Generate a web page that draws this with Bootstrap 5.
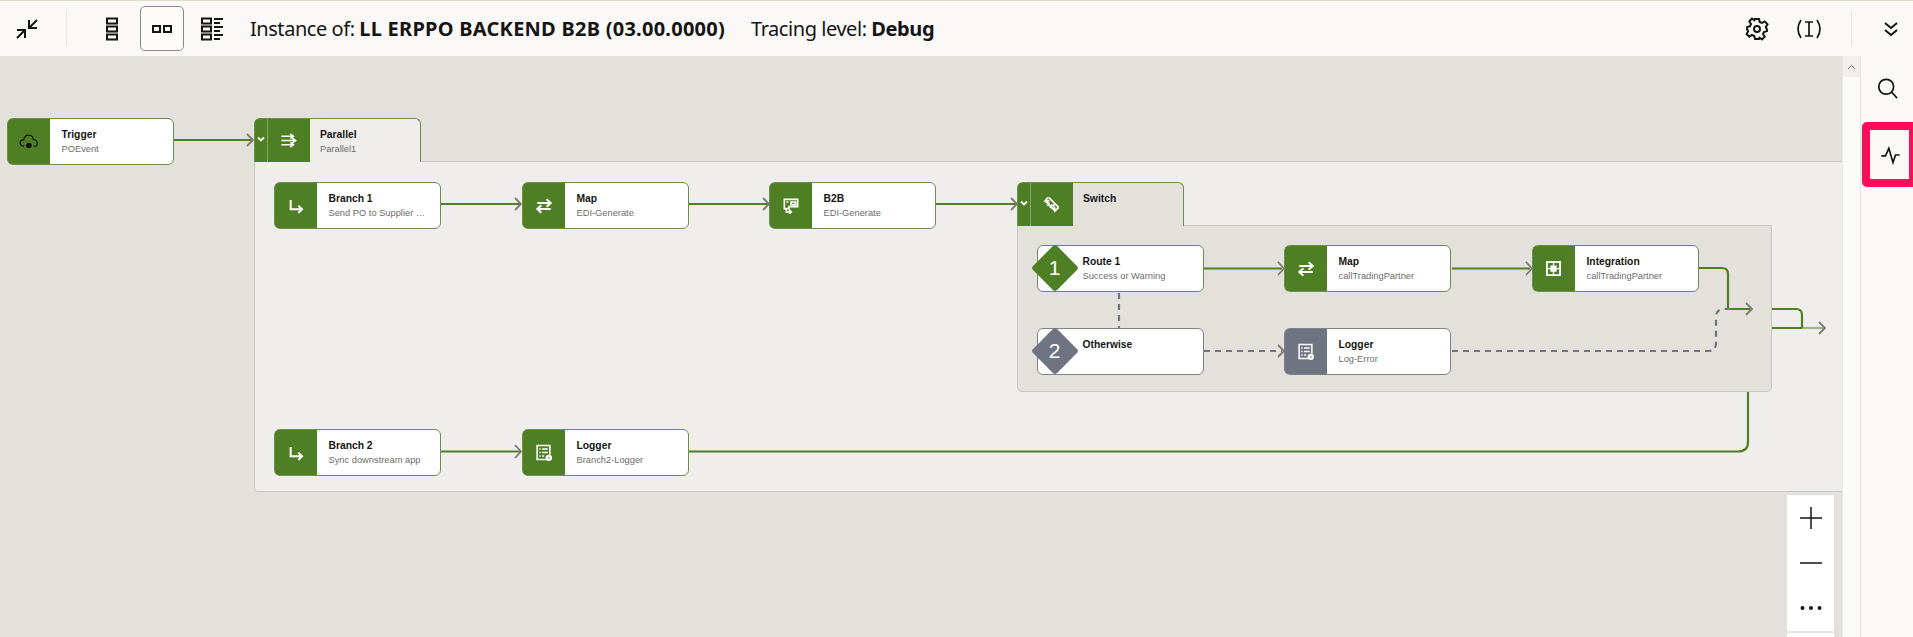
<!DOCTYPE html>
<html lang="en">

<head>
    <meta charset="UTF-8">
    <meta name="viewport" content="width=device-width, initial-scale=1.0">
    <title>Instance of LL ERPPO BACKEND B2B</title>
    <link href="https://cdn.jsdelivr.net/npm/bootstrap@5.3.0/dist/css/bootstrap.min.css" rel="stylesheet">
    <style>
        html, body { height: 100%; overflow: hidden; }
        body { background: #e4e1dc; color: #161513; font-family: "Liberation Sans", Arial, sans-serif; }

        .top-bar { height: 56px; background: #fbf9f8; border-top: 1px solid #dcdccb; flex: none; }
        .bar-title { font-family: "Noto Sans", sans-serif; font-size: 20px; letter-spacing: -0.45px; white-space: nowrap; line-height: 1; }
        .bar-title b { font-weight: 700; letter-spacing: 0.25px; }
        .bar-title b.tight { letter-spacing: -0.4px; }
        .bar-sep { width: 1px; height: 37px; background: #e6e4e1; }
        .bar-btn { width: 44px; height: 45px; padding: 0; border: 1px solid transparent; border-radius: 5px; background: transparent; }
        .bar-btn.picked { border-color: #8d8a85; background: #fdfcfb; }
        .ico { fill: none; stroke: #161513; stroke-width: 2; }

        .work-area { height: 581px; }
        .canvas { width: 1842px; background: #e4e1dc; overflow: hidden; }
        .scroll-strip { width: 19px; background: #fbfbfa; border-left: 1px solid #e9e8e6; border-right: 1px solid #e6e4e2; }
        .scroll-up { height: 21px; background: #f0efee; }
        .side-rail { width: 52px; background: #faf9f7; overflow: hidden; }
        .rail-search { height: 66px; padding-top: 22px; padding-left: 1px; }
        .rail-mark { width: 55px; height: 65px; flex: none; margin-left: 1px; border: 8px solid #fe0d5b; border-radius: 5px; }

        .group-box { position: absolute; border: 1px solid #c9c6c0; border-radius: 0 0 4px 4px; }
        .group-outer { background: #efeeec; }
        .group-inner { background: #e4e1dc; border-radius: 0 0 5px 5px; }

        .flow-node { position: absolute; width: 167px; height: 47px; background: #fff; border: 1.5px solid #6a9149; border-radius: 6px; }
        .flow-node.idle { border-color: #7f828a; }
        .flow-node.tab { height: 44px; border-bottom: 0; border-radius: 6px 6px 0 0; background: #efeeec; }
        .flow-node.tab.on-inner { background: #e4e1dc; }
        .node-icon { width: 41.5px; background: #4f7f24; border-radius: 4px 0 0 4px; flex: none; }
        .flow-node.idle .node-icon { background: #6e7480; }
        .node-fold { width: 13px; background: #4f7f24; border-right: 1px solid #86a568; border-radius: 4px 0 0 0; flex: none; padding-top: 15px; }
        .tab .node-icon { border-radius: 0; }
        .node-text { padding: 9px 0 0 12px; min-width: 0; }
        .tab .node-text { padding-left: 10.5px; }
        .node-name { font-size: 10.3px; font-weight: 700; line-height: 13px; height: 13px; white-space: nowrap; }
        .node-sub { font-size: 9.3px; color: #6f6c68; line-height: 13px; margin-top: 2px; white-space: nowrap; }
        .route-text { padding-left: 44.5px; }
        .route-mark { position: absolute; left: -0.5px; top: 5px; width: 34px; height: 34px; background: #4f7f24; border-radius: 3px; transform: rotate(45deg); }
        .idle .route-mark { background: #6e7480; }
        .route-num { position: absolute; left: -0.5px; top: 5px; width: 34px; height: 34px; color: #fff; font-size: 21px; line-height: 34px; text-align: center; }

        .edges { position: absolute; left: 0; top: 0; }
        .edge { fill: none; stroke: #4f7f24; stroke-width: 2.2; }
        .edge-off { fill: none; stroke: #6e7480; stroke-width: 2.2; stroke-dasharray: 6 5; }
        .edge-tip { fill: none; stroke: #7d7a73; stroke-width: 1.8; }

        .zoom-tools { position: absolute; left: 1787px; top: 439px; width: 47px; background: #fff; }
        .zoom-btn { height: 45px; }
        .zoom-end { height: 10px; border-top: 2px solid #e6e4e1; margin-top: 1px; }
    </style>
</head>

<body>
    <svg width="0" height="0" class="position-absolute">
        <symbol id="i-trigger" viewBox="0 0 24 24">
            <path d="M6.5 18C3 18 1 15.5 1.5 13 2 11 4 9.5 6 10 6.5 6 9.5 4 12.5 4 16 4 18 7 18 9.5 21 9.5 23 12 23 14.5 23 16.5 21 18 18.5 18" fill="none" stroke="#111" stroke-width="1.5"/>
            <circle cx="12.5" cy="17" r="3.5" fill="#111"/>
        </symbol>
        <symbol id="i-parallel" viewBox="0 0 24 24">
            <path d="M2 6H18M14.5 2.5 19 6 14.5 9.5M2 12H21M17.5 8.5 22 12 17.5 15.5M2 18H18M14.5 14.5 19 18 14.5 21.5" fill="none" stroke="#fff" stroke-width="2.2"/>
        </symbol>
        <symbol id="i-branch" viewBox="0 0 24 24">
            <path d="M4 3V17H21M15.5 11.5 21 17 15.5 22.5" fill="none" stroke="#fff" stroke-width="3"/>
        </symbol>
        <symbol id="i-map" viewBox="0 0 24 24">
            <path d="M3 8H21M15.5 3 21 8 15.5 13M21 16H3M8.5 11 3 16 8.5 21" fill="none" stroke="#fff" stroke-width="2.6"/>
        </symbol>
        <symbol id="i-b2b" viewBox="0 0 24 24">
            <path d="M2 2H22V13H9V16H2ZM5 6H8M12 6H19V10H12Z" fill="none" stroke="#fff" stroke-width="2.4"/>
            <path d="M5 16V21H12M9 17.5 12.5 21 9 24" fill="none" stroke="#fff" stroke-width="2.4"/>
        </symbol>
        <symbol id="i-switch" viewBox="0 0 24 24">
            <path d="M3 7 17 21M8 2 22 16M7 2 3 7 9 7M22 16 17 21 16 15M9 9 6 14M13 12 10 17M17 10 14 15" fill="none" stroke="#fff" stroke-width="2.4"/>
        </symbol>
        <symbol id="i-logger" viewBox="0 0 24 24">
            <path d="M16 22H3V2H21V15" fill="none" stroke="#fff" stroke-width="2.2"/>
            <path d="M6 7H8M10 7H18M6 12H8M10 12H18M6 17H8M10 17H13" fill="none" stroke="#fff" stroke-width="2.2"/>
            <circle cx="19.5" cy="19.5" r="4.5" fill="#fff"/>
            <circle cx="19.5" cy="19.5" r="1.3" fill="#8a8f99"/>
        </symbol>
        <symbol id="i-integration" viewBox="0 0 24 24">
            <rect x="0" y="0" width="24" height="24" fill="#fff"/>
            <path d="M3 3H11V7H7V11H3ZM21 3V11H17V7H13V3ZM21 21H13V17H17V13H21ZM3 21V13H7V17H11V21Z" fill="#4f7f24"/>
        </symbol>
        <symbol id="i-fold" viewBox="0 0 10 10">
            <path d="M2 3.5 5 6.5 8 3.5" fill="none" stroke="#fff" stroke-width="1.8"/>
        </symbol>
    </svg>

    <div class="d-flex flex-column h-100">
        <header class="top-bar d-flex align-items-center">
            <div class="d-flex justify-content-center" style="width:54px">
                <svg class="ico" width="24" height="24" viewBox="0 0 24 24"><path d="M14 11 22 3M14 3V11H22M10 13 2 21M2 13H10V21"/></svg>
            </div>
            <div class="bar-sep" style="margin-left:12px"></div>
            <div class="d-flex align-items-center" style="margin-left:23px;gap:6px">
                <button class="bar-btn d-flex align-items-center justify-content-center" type="button">
                    <svg class="ico" width="12" height="24" viewBox="0 0 12 24"><path d="M1 1.5H11V6.5H1ZM1 9.5H11V14.5H1ZM1 17.5H11V22.5H1Z"/></svg>
                </button>
                <button class="bar-btn picked d-flex align-items-center justify-content-center" type="button">
                    <svg class="ico" width="20" height="8" viewBox="0 0 20 8"><path d="M1 1H8V7H1ZM12 1H19V7H12Z"/></svg>
                </button>
                <button class="bar-btn d-flex align-items-center justify-content-center" type="button">
                    <svg class="ico" width="22" height="24" viewBox="0 0 22 24"><path d="M1 1.5H10V6.5H1ZM1 9.5H10V14.5H1ZM1 17.5H10V22.5H1ZM13 2H22M13 6H19M13 10H22M13 14H19M13 18H22M13 22H19"/></svg>
                </button>
            </div>
            <div class="bar-title" style="margin-left:16px">Instance of: <b>LL ERPPO BACKEND B2B (03.00.0000)</b></div>
            <div class="bar-title" style="margin-left:26px">Tracing level: <b class="tight">Debug</b></div>
            <div class="ms-auto d-flex align-items-center">
                <svg class="ico" width="24" height="24" viewBox="0 0 24 24">
                    <path d="M10 2H14L14.7 5 17 6 19.7 4.4 22.5 7.3 20.8 10 21.8 12 22 14 19 15 18 17 19.7 19.7 17 22.4 14.5 20.7 14 21.9H10L9.3 19 7 18 4.3 19.7 1.6 17 3.2 14.3 2 12 2.2 10 5 9.2 6 7 4.3 4.3 7 1.6 9.5 3.3Z"/>
                    <circle cx="12" cy="12" r="3"/>
                </svg>
                <svg class="ico" width="24" height="24" viewBox="0 0 24 24" style="margin-left:28px;stroke-width:1.7">
                    <path d="M4 3C0 9 0 15 4 21M20 3C24 9 24 15 20 21M8 5H16M8 19H16M12 5V19"/>
                </svg>
                <div class="bar-sep" style="margin-left:30px"></div>
                <svg class="ico" width="16" height="16" viewBox="0 0 16 16" style="margin:0 14px 0 31px">
                    <path d="M2 2 8 7 14 2M2 9 8 14 14 9"/>
                </svg>
            </div>
        </header>

        <div class="work-area d-flex flex-grow-1">
            <main class="canvas position-relative" id="canvas">
                <div class="group-box group-outer" style="left:254px;top:105px;width:1600px;height:331px"></div>
                <div class="group-box group-inner" style="left:1017px;top:169px;width:755px;height:167px"></div>
                <div id="nodes"></div>
                <svg class="edges" width="1842" height="581" viewBox="0 56 1842 581">
                    <path class="edge" d="M174 140H252M441 204H520M689 204H768M936 204H1016M1204 268.5H1282M1452 268.5H1530"/>
                    <path class="edge" d="M1699 268H1722Q1728 268 1728 274V309H1750"/>
                    <path class="edge" d="M1772 309H1796Q1802 309 1802 315V328M1772 328H1802"/>
                    <path class="edge" d="M1802 328H1824" stroke-opacity="0.5"/>
                    <path class="edge" d="M1748 392V442Q1748 451.5 1738 451.5H689M441 451.5H520"/>
                    <path class="edge-off" d="M1119 293V328M1204 351H1282M1452 351H1708Q1716 351 1716 343V317Q1716 309 1724 309H1734"/>
                    <path class="edge-tip" d="M247 134 253 140 247 146M515 198 521 204 515 210M763 198 769 204 763 210M1011 198 1017 204 1011 210M1278 262 1284 268.5 1278 275M1526 262 1532 268.5 1526 275M1278 345 1284 351 1278 357M1746 303 1752 309 1746 315M1819 322 1825 328 1819 334M515 445 521 451.5 515 458"/>
                </svg>
                <div id="route-nodes"></div>
                <div class="zoom-tools d-flex flex-column">
                    <div class="zoom-btn d-flex align-items-center justify-content-center">
                        <svg width="22" height="22" viewBox="0 0 22 22"><path d="M11 0V22M0 11H22" stroke="#161513" stroke-width="1.5"/></svg>
                    </div>
                    <div class="zoom-btn d-flex align-items-center justify-content-center">
                        <svg width="22" height="22" viewBox="0 0 22 22"><path d="M0 11H22" stroke="#161513" stroke-width="1.5"/></svg>
                    </div>
                    <div class="zoom-btn d-flex align-items-center justify-content-center">
                        <svg width="22" height="6" viewBox="0 0 22 6"><circle cx="2.5" cy="3" r="2" fill="#161513"/><circle cx="11" cy="3" r="2" fill="#161513"/><circle cx="19.5" cy="3" r="2" fill="#161513"/></svg>
                    </div>
                    <div class="zoom-end"></div>
                </div>
            </main>
            <div class="scroll-strip">
                <div class="scroll-up d-flex align-items-center justify-content-center">
                    <svg width="9" height="6" viewBox="0 0 9 6"><path d="M1 5 4.5 1.5 8 5" fill="none" stroke="#77757a" stroke-width="1"/></svg>
                </div>
            </div>
            <aside class="side-rail d-flex flex-column">
                <div class="rail-search d-flex justify-content-center">
                    <svg class="ico" width="21" height="21" viewBox="0 0 24 24"><circle cx="10.5" cy="10" r="8.5"/><path d="M16.5 16 23 23"/></svg>
                </div>
                <div class="rail-mark d-flex align-items-center">
                    <svg class="ico" width="21" height="20" viewBox="0 0 24 24" style="margin-left:10px"><path d="M1 13H6L10 4 15 21 18 12H23"/></svg>
                </div>
            </aside>
        </div>
    </div>

    <script src="https://cdn.jsdelivr.net/npm/bootstrap@5.3.0/dist/js/bootstrap.bundle.min.js"></script>

    <script>
        const TOP = 56;

        const nodes = [
            { x: 7, y: 118, name: 'Trigger', sub: 'POEvent', icon: 'i-trigger', size: 19 },
            { x: 254, y: 118, name: 'Parallel', sub: 'Parallel1', icon: 'i-parallel', size: 17, tab: true },
            { x: 274, y: 182, name: 'Branch 1', sub: 'Send PO to Supplier …', icon: 'i-branch', size: 16 },
            { x: 522, y: 182, name: 'Map', sub: 'EDI-Generate', icon: 'i-map', size: 18 },
            { x: 769, y: 182, name: 'B2B', sub: 'EDI-Generate', icon: 'i-b2b', size: 16 },
            { x: 1017, y: 182, name: 'Switch', sub: '', icon: 'i-switch', size: 17, tab: true, inner: true },
            { x: 1284, y: 245, name: 'Map', sub: 'callTradingPartner', icon: 'i-map', size: 18 },
            { x: 1532, y: 245, name: 'Integration', sub: 'callTradingPartner', icon: 'i-integration', size: 15 },
            { x: 1284, y: 328, name: 'Logger', sub: 'Log-Error', icon: 'i-logger', size: 17, idle: true },
            { x: 274, y: 429, name: 'Branch 2', sub: 'Sync downstream app', icon: 'i-branch', size: 16 },
            { x: 522, y: 429, name: 'Logger', sub: 'Branch2-Logger', icon: 'i-logger', size: 17 }
        ];

        const routes = [
            { x: 1037, y: 245, name: 'Route 1', sub: 'Success or Warning', num: 1 },
            { x: 1037, y: 328, name: 'Otherwise', sub: '', num: 2, idle: true }
        ];

        function iconSvg(id, size) {
            return `<svg width="${size}" height="${size}"><use href="#${id}"></use></svg>`;
        }

        function renderNode(n) {
            const classes = ['flow-node', 'd-flex'];
            if (n.idle) classes.push('idle');
            if (n.tab) classes.push('tab');
            if (n.inner) classes.push('on-inner');
            const fold = n.tab ? `<div class="node-fold d-flex justify-content-center">${iconSvg('i-fold', 10)}</div>` : '';
            return `
                <div class="${classes.join(' ')}" style="left:${n.x}px;top:${n.y - TOP}px">
                    ${fold}
                    <div class="node-icon d-flex align-items-center justify-content-center">${iconSvg(n.icon, n.size)}</div>
                    <div class="node-text">
                        <div class="node-name">${n.name}</div>
                        <div class="node-sub">${n.sub}</div>
                    </div>
                </div>`;
        }

        function renderRoute(r) {
            return `
                <div class="flow-node ${r.idle ? 'idle' : ''}" style="left:${r.x}px;top:${r.y - TOP}px">
                    <div class="route-mark"></div>
                    <div class="route-num">${r.num}</div>
                    <div class="node-text route-text">
                        <div class="node-name">${r.name}</div>
                        <div class="node-sub">${r.sub}</div>
                    </div>
                </div>`;
        }

        document.getElementById('nodes').innerHTML = nodes.map(renderNode).join('');
        document.getElementById('route-nodes').innerHTML = routes.map(renderRoute).join('');
    </script>
</body>

</html>
